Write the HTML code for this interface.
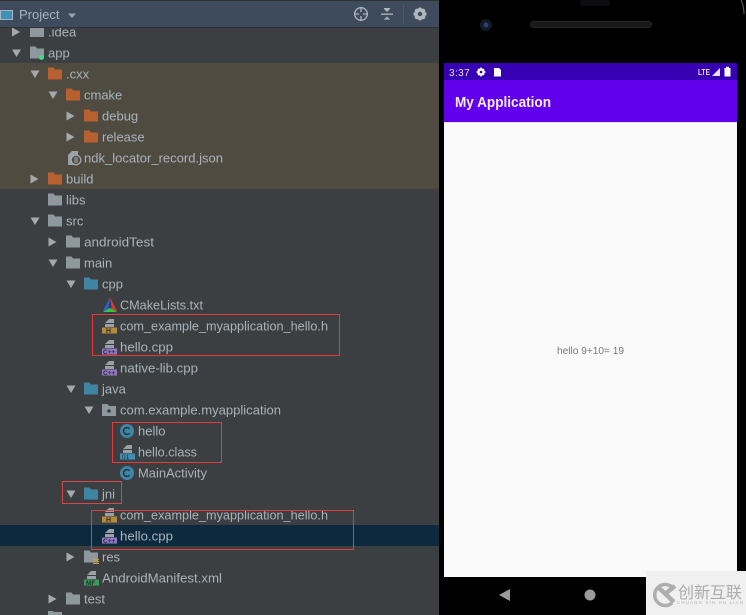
<!DOCTYPE html>
<html><head><meta charset="utf-8"><style>
html,body{margin:0;padding:0;background:#000}
body{width:746px;height:615px;overflow:hidden}
svg{display:block}
.t text{font:13px "Liberation Sans",sans-serif;fill:#a9b3bb}
.s{font-family:"Liberation Sans",sans-serif}
</style></head><body>
<svg width="746" height="615" viewBox="0 0 746 615" xmlns="http://www.w3.org/2000/svg">
<defs>
<path id="f" d="M0-6.500h5.500l1.500 2h7v10h-14z"/>
<path id="ad" fill="#a6a9ab" d="M0-3.500h9l-4.500 7.500z"/>
<path id="ar" fill="#a6a9ab" d="M0-4.500l8 4.500-8 4.500z"/>
<path id="doc" fill="#9aa1a6" d="M3 1V-2H12V1z M3-3L7-7H12V-3z"/>
<g id="h"><use href="#doc"/><rect x="0" y="1.500" width="15" height="6" fill="#b58c3d"/><text x="4" y="7" font-size="7" font-weight="bold" fill="#33302a" class="s">H</text></g>
<g id="cp"><use href="#doc"/><rect x="0" y="1.500" width="15" height="6" fill="#9079c1"/><text x="1" y="7" font-size="6.500" font-weight="bold" fill="#2f2a3d" class="s">C++</text></g>
<g id="c"><circle cx="7" cy="0" r="7" fill="#3e86a6"/><path d="M9.600-2.200A3.400 3.400 0 1 0 9.600 2.200" fill="none" stroke="#26333b" stroke-width="1.500"/></g>
</defs>

<!-- left panel -->
<rect x="0" y="0" width="439" height="615" fill="#3c3f41"/>
<rect x="0" y="63" width="439" height="126" fill="#4f4b41"/>
<rect x="0" y="525" width="439" height="21" fill="#0d293e"/>

<g fill="#a6a9ab">
<use href="#ar" x="12" y="32"/><use href="#ad" x="12" y="53"/>
<use href="#ad" x="30.500" y="74"/><use href="#ad" x="48.500" y="95"/>
<use href="#ar" x="66.500" y="116"/><use href="#ar" x="66.500" y="137"/>
<use href="#ar" x="30.500" y="179"/><use href="#ad" x="30.500" y="221"/>
<use href="#ar" x="48.500" y="242"/><use href="#ad" x="48.500" y="263"/>
<use href="#ad" x="66.500" y="284"/><use href="#ad" x="66.500" y="389"/>
<use href="#ad" x="84.500" y="410"/><use href="#ad" x="66.500" y="494"/>
<use href="#ar" x="66.500" y="557"/><use href="#ar" x="48.500" y="599"/>
</g>

<g fill="#8d999f">
<path d="M30 26h14v11H30z"/>
<use href="#f" x="30" y="53"/>
<use href="#f" x="48" y="200"/><use href="#f" x="48" y="221"/>
<use href="#f" x="66" y="242"/><use href="#f" x="66" y="263"/>
<use href="#f" x="84" y="557"/><use href="#f" x="66" y="599"/>
<path d="M102 404h5.500l1.500 2h7v10h-14z"/>
<path d="M48 615v-4h5l1 1h8v3z"/>
</g>
<circle cx="41.500" cy="57.500" r="2.500" fill="#3fdc7a"/>
<circle cx="109" cy="411" r="1.800" fill="#3c3f41"/>
<g fill="#b8602f">
<use href="#f" x="48" y="74"/><use href="#f" x="66" y="95"/>
<use href="#f" x="84" y="116"/><use href="#f" x="84" y="137"/>
<use href="#f" x="48" y="179"/>
</g>
<g fill="#3f84a3">
<use href="#f" x="84" y="284"/><use href="#f" x="84" y="389"/><use href="#f" x="84" y="494"/>
</g>

<!-- json icon -->
<path d="M68 165V155l4-4h6v14z" fill="#9aa1a6"/>
<circle cx="76" cy="160" r="4.800" fill="#4f4b41" stroke="#a7adb0" stroke-width="1.200"/>
<path d="M75 157v6M77 157v6" stroke="#a7adb0"/>
<!-- cmake -->
<path d="M110 297l-7 14h5z" fill="#2f5fd0"/><path d="M110 297l7 14h-5z" fill="#d23a3a"/>
<path d="M103 312l7-4 7 4z" fill="#35c93a"/>
<use href="#h" x="102" y="326"/><use href="#cp" x="102" y="347"/><use href="#cp" x="102" y="368"/>
<use href="#c" x="120" y="431"/>
<use href="#doc" x="120" y="452"/><rect x="120" y="453.500" width="15" height="6" fill="#3f8fb5"/>
<text x="122" y="459" font-size="6.500" fill="#233" class="s">01</text>
<use href="#c" x="120" y="473"/>
<use href="#h" x="102" y="515"/><use href="#cp" x="102" y="536"/>
<g fill="#d9a03c"><rect x="93" y="559" width="6" height="1"/><rect x="93" y="561" width="6" height="1"/><rect x="93" y="563" width="6" height="1"/></g>
<use href="#doc" x="84" y="578"/><rect x="84" y="579.500" width="15" height="6" fill="#3a9b60"/>
<text x="86" y="585" font-size="6.500" font-weight="bold" fill="#1e3326" class="s">MF</text>

<g class="t">
<text x="48" y="36.500">.idea</text>
<text x="48" y="57.500">app</text>
<text x="66" y="78.500">.cxx</text>
<text x="84" y="99.500">cmake</text>
<text x="102" y="120.500">debug</text>
<text x="102" y="141.500">release</text>
<text x="84" y="162.500" textLength="139" lengthAdjust="spacingAndGlyphs">ndk_locator_record.json</text>
<text x="66" y="183.500">build</text>
<text x="66" y="204.500">libs</text>
<text x="66" y="225.500">src</text>
<text x="84" y="246.500" textLength="70" lengthAdjust="spacingAndGlyphs">androidTest</text>
<text x="84" y="267.500">main</text>
<text x="102" y="288.500">cpp</text>
<text x="120" y="309.500" textLength="83" lengthAdjust="spacingAndGlyphs">CMakeLists.txt</text>
<text x="120" y="330.500" textLength="208" lengthAdjust="spacingAndGlyphs">com_example_myapplication_hello.h</text>
<text x="120" y="351.500" textLength="53" lengthAdjust="spacingAndGlyphs">hello.cpp</text>
<text x="120" y="372.500" textLength="78" lengthAdjust="spacingAndGlyphs">native-lib.cpp</text>
<text x="102" y="393.500">java</text>
<text x="120" y="414.500" textLength="161" lengthAdjust="spacingAndGlyphs">com.example.myapplication</text>
<text x="138" y="435.500">hello</text>
<text x="138" y="456.500" textLength="59" lengthAdjust="spacingAndGlyphs">hello.class</text>
<text x="138" y="477.500" textLength="69" lengthAdjust="spacingAndGlyphs">MainActivity</text>
<text x="102" y="498.500">jni</text>
<text x="120" y="519.500" textLength="208" lengthAdjust="spacingAndGlyphs">com_example_myapplication_hello.h</text>
<text x="120" y="540.500" textLength="53" lengthAdjust="spacingAndGlyphs">hello.cpp</text>
<text x="102" y="561.500">res</text>
<text x="102" y="582.500" textLength="120" lengthAdjust="spacingAndGlyphs">AndroidManifest.xml</text>
<text x="84" y="603.500">test</text>
</g>

<!-- header -->
<rect x="0" y="0" width="439" height="27" fill="#3d4b5c"/>
<rect x="0" y="0" width="439" height="1" fill="#2f3336"/>
<rect x="0" y="27" width="439" height="1" fill="#2d3236"/>
<rect x="0.500" y="10.500" width="12" height="9" fill="#3d91b8" stroke="#a8b4bd"/>
<text x="19" y="19" font-size="13" fill="#a9b3bb" class="s">Project</text>
<path d="M68 13.500h8l-4 4.500z" fill="#9ba3a9"/>
<g fill="none" stroke="#b0b6ba" stroke-width="1.300">
<circle cx="361" cy="14" r="6.300"/><path d="M361 7v5M361 16v5M354 14h5M363 14h5"/>
</g>
<path d="M381 13.500h12v1.300h-12z" fill="#b0b6ba"/>
<path d="M384 9h6l-3 3zM384 19.500h6l-3-3z M384 8h6v1h-6zM384 19h6v1h-6z" fill="#b0b6ba"/>
<rect x="403" y="4" width="1" height="20" fill="#4e5a67"/>
<circle cx="420" cy="14" r="4.500" fill="none" stroke="#b0b6ba" stroke-width="2.800"/>
<g stroke="#b0b6ba" stroke-width="2.400"><path d="M420 7.500v13M413.500 14h13M415.400 9.400l9.200 9.200M424.600 9.400l-9.200 9.200"/></g>
<circle cx="420" cy="14" r="2.200" fill="#3d4b5c"/>

<!-- red boxes -->
<g fill="none" stroke="#e23c3c" stroke-width="1">
<rect x="92.500" y="314.500" width="247" height="41"/>
<rect x="112.500" y="422.500" width="109" height="40"/>
<rect x="62.500" y="481.500" width="59" height="22" stroke="#d8474a"/>
<rect x="91.500" y="510.500" width="262" height="39"/>
</g>

<!-- phone -->
<rect x="439" y="0" width="307" height="615" fill="#000"/>
<rect x="580" y="0" width="30" height="6" rx="2" fill="#0b0d10"/>
<rect x="530.500" y="21.500" width="121" height="6" rx="3" fill="#191919" stroke="#262626"/>
<circle cx="486" cy="25" r="6" fill="#15181f"/><circle cx="486" cy="25" r="2.500" fill="#28407c"/>
<path d="M741 0c2 4 3 8 3 14" stroke="#666" fill="none"/>
<rect x="444" y="63" width="293" height="17" fill="#3700b3"/>
<rect x="444" y="80" width="293" height="42" fill="#6200ee"/>
<rect x="444" y="122" width="293" height="455" fill="#fafafa"/>
<rect x="444" y="122" width="293" height="1" fill="#e2e0ec"/>
<text x="449" y="76" font-size="10" fill="#e8e0f8" class="s" letter-spacing=".4">3:37</text>
<circle cx="481" cy="72" r="2.800" fill="none" stroke="#fff" stroke-width="2"/>
<g stroke="#fff" stroke-width="1.400"><path d="M481 67.500v9M476.500 72h9M478 69l6 6M484 69l-6 6"/></g>
<circle cx="481" cy="72" r="1.300" fill="#3700b3"/>
<path d="M494 68h5l2 2v6.500h-7z" fill="#fff"/>
<text x="698" y="75" font-size="8" fill="#e6def8" class="s" font-weight="bold" textLength="12" lengthAdjust="spacingAndGlyphs">LTE</text>
<path d="M712 76l8-8v8z" fill="#e8e0f8"/>
<rect x="724.500" y="68" width="6" height="8.500" fill="#fff"/><rect x="726" y="66.800" width="3" height="1.500" fill="#fff"/>
<text x="455" y="107" font-size="15" font-weight="bold" fill="#f4eefe" class="s" textLength="96" lengthAdjust="spacingAndGlyphs">My Application</text>
<text x="557" y="354" font-size="10.500" fill="#777" class="s" textLength="67" lengthAdjust="spacingAndGlyphs">hello 9+10= 19</text>
<path d="M510 589v12l-11-6z" fill="#9a9a9a"/>
<circle cx="590" cy="595" r="5.500" fill="#9a9a9a"/>

<!-- watermark -->
<rect x="646" y="571" width="100" height="44" fill="#f0f0f0"/>
<path d="M672 587A10.500 10.500 0 1 0 672 603" fill="none" stroke="#aeaeae" stroke-width="3.500"/>
<path d="M659 588l15 14M675 586l-10 8" stroke="#aeaeae" stroke-width="4.500" fill="none"/>
<text x="678" y="598" font-size="16" fill="#acacac" style='font-family:"Noto Sans CJK SC",sans-serif'>创新互联</text>
<text x="677" y="604" font-size="4.500" fill="#b4b4b4" class="s" textLength="66">CHUANG XIN HU LIAN</text>
</svg>
</body></html>
